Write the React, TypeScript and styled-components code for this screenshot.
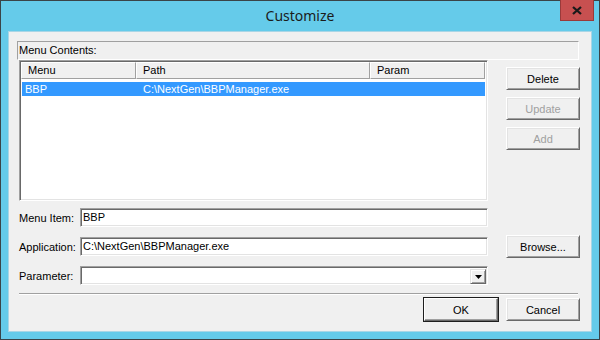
import styled, { createGlobalStyle } from "styled-components";

const GlobalStyle = createGlobalStyle`
  html, body {
    margin: 0;
    padding: 0;
    background: #ffffff;
  }
  * {
    box-sizing: border-box;
  }
`;

const columns = [
  { title: "Menu", width: 115 },
  { title: "Path", width: 234 },
  { title: "Param", width: 115 },
];

const App = () => {
  return (
    <>
      <GlobalStyle />
      <Window>
        <TitleBar>
          <Title>Customize</Title>
          <CloseButton aria-label="Close">
            <svg width="10" height="9" viewBox="0 0 10 9">
              <path
                d="M1 1 L9 8 M9 1 L1 8"
                stroke="#1a1a1a"
                strokeWidth="2.3"
                fill="none"
              />
            </svg>
          </CloseButton>
        </TitleBar>

        <Client>
          <GroupHeader>Menu Contents:</GroupHeader>

          <ListRow>
            <ListView>
              <HeaderRow>
                {columns.map((c) => (
                  <HeaderCell key={c.title} $width={c.width}>
                    {c.title}
                  </HeaderCell>
                ))}
              </HeaderRow>
              <ItemRow $selected>
                <ItemCell $width={114} $pad={3}>
                  BBP
                </ItemCell>
                <ItemCell $width={234} $pad={7}>
                  C:\NextGen\BBPManager.exe
                </ItemCell>
                <ItemCell $width={115} $pad={7}></ItemCell>
              </ItemRow>
            </ListView>

            <ButtonColumn>
              <Button>Delete</Button>
              <Button disabled>Update</Button>
              <Button disabled>Add</Button>
            </ButtonColumn>
          </ListRow>

          <Form>
            <Label>Menu Item:</Label>
            <TextField>BBP</TextField>
            <span />

            <Label>Application:</Label>
            <TextField>C:\NextGen\BBPManager.exe</TextField>
            <RowButton>Browse...</RowButton>

            <Label>Parameter:</Label>
            <Combo>
              <ComboText></ComboText>
              <ComboArrow>
                <svg width="7" height="4" viewBox="0 0 7 4">
                  <path d="M0 0 H7 L3.5 4 Z" fill="#000" />
                </svg>
              </ComboArrow>
            </Combo>
            <span />
          </Form>

          <Separator />

          <Footer>
            <Button $default>OK</Button>
            <Button>Cancel</Button>
          </Footer>
        </Client>
      </Window>
    </>
  );
};

const Window = styled.div`
  width: 600px;
  height: 340px;
  border: 1px solid #3a4448;
  background-color: #65cbea;
  display: flex;
  flex-direction: column;
  font-family: "Liberation Sans", Arial, sans-serif;
  font-size: 11px;
  color: #000;
`;

const TitleBar = styled.div`
  height: 30px;
  display: grid;
  grid-template-columns: 1fr auto 1fr;
  align-items: start;
`;

const Title = styled.div`
  grid-column: 2;
  font-family: "Noto Sans", "Liberation Sans", sans-serif;
  font-size: 14px;
  line-height: 30px;
  color: #1b1b1b;
`;

const CloseButton = styled.button`
  grid-column: 3;
  justify-self: end;
  margin: -1px 5px 0 0;
  width: 34px;
  height: 21px;
  padding: 0;
  border: 1px solid #9a3a3a;
  border-top: none;
  background-color: #c75050;
  display: flex;
  align-items: center;
  justify-content: center;
`;

const Client = styled.div`
  flex: 1;
  margin: 0 7px 7px 7px;
  background-color: #f0f0f0;
  border: 1px solid #a9d6e6;
  padding: 9px 11px 0 8px;
  display: flex;
  flex-direction: column;
`;

const GroupHeader = styled.div`
  height: 19px;
  margin-right: 1px;
  border-top: 1px solid #a0a0a0;
  border-left: 1px solid #a0a0a0;
  border-right: 1px solid #ffffff;
  border-bottom: 1px solid #ffffff;
  padding-left: 1px;
  line-height: 17px;
`;

const ListRow = styled.div`
  display: grid;
  grid-template-columns: 469px 1fr;
  margin-left: 2px;
`;

const ListView = styled.div`
  height: 141px;
  background-color: #ffffff;
  border-top: 1px solid #a0a0a0;
  border-left: 1px solid #a0a0a0;
  border-right: 1px solid #ffffff;
  border-bottom: 1px solid #ffffff;
  box-shadow: inset 1px 1px 0 #696969, inset -1px -1px 0 #e3e3e3;
  padding: 1px;
`;

const HeaderRow = styled.div`
  display: flex;
  height: 17px;
`;

const HeaderCell = styled.div<{ $width: number }>`
  width: ${(p) => p.$width}px;
  flex: none;
  background-color: #f0f0f0;
  border-top: 1px solid #ffffff;
  border-left: 1px solid #ffffff;
  border-right: 1px solid #a0a0a0;
  border-bottom: 1px solid #a0a0a0;
  padding-left: 6px;
  line-height: 15px;
`;

const ItemRow = styled.div<{ $selected?: boolean }>`
  display: flex;
  height: 14px;
  margin: 3px 0 0 1px;
  width: 463px;
  background-color: ${(p) => (p.$selected ? "#3399ff" : "transparent")};
  color: ${(p) => (p.$selected ? "#ffffff" : "#000000")};
  line-height: 14px;
`;

const ItemCell = styled.div<{ $width: number; $pad: number }>`
  width: ${(p) => p.$width}px;
  flex: none;
  padding-left: ${(p) => p.$pad}px;
  white-space: nowrap;
`;

const ButtonColumn = styled.div`
  display: flex;
  flex-direction: column;
  align-items: flex-end;
  gap: 7px;
  padding-top: 7px;
`;

const Button = styled.button<{ $default?: boolean }>`
  width: 74px;
  height: 23px;
  padding: 0;
  font-family: "Liberation Sans", Arial, sans-serif;
  font-size: 11px;
  color: #000;
  background-color: #f0f0f0;
  border-top: 1px solid #ffffff;
  border-left: 1px solid #ffffff;
  border-right: 1px solid #696969;
  border-bottom: 1px solid #696969;
  box-shadow: ${(p) =>
    p.$default
      ? "0 0 0 1px #1e1e1e, inset -1px -1px 0 #a0a0a0"
      : "inset 1px 1px 0 #e3e3e3, inset -1px -1px 0 #a0a0a0"};

  &:disabled {
    color: #a0a0a0;
  }
`;

const RowButton = styled(Button)`
  justify-self: end;
  margin: -2px 0;
`;

const Form = styled.div`
  display: grid;
  grid-template-columns: 61px 408px 1fr;
  grid-template-rows: 19px 19px 19px;
  row-gap: 10px;
  align-items: center;
  margin: 7px 0 0 2px;
`;

const Label = styled.div`
  white-space: nowrap;
`;

const fieldBorder = `
  background-color: #ffffff;
  border-top: 1px solid #a0a0a0;
  border-left: 1px solid #a0a0a0;
  border-right: 1px solid #ffffff;
  border-bottom: 1px solid #ffffff;
  box-shadow: inset 1px 1px 0 #696969, inset -1px -1px 0 #e3e3e3;
`;

const TextField = styled.div`
  ${fieldBorder}
  height: 19px;
  padding-left: 2px;
  line-height: 17px;
  white-space: nowrap;
`;

const Combo = styled.div`
  ${fieldBorder}
  height: 19px;
  display: flex;
  padding: 2px 1px 1px 2px;
`;

const ComboText = styled.div`
  flex: 1;
`;

const ComboArrow = styled.div`
  width: 16px;
  height: 15px;
  background-color: #f0f0f0;
  border-top: 1px solid #e3e3e3;
  border-left: 1px solid #e3e3e3;
  border-right: 1px solid #696969;
  border-bottom: 1px solid #696969;
  box-shadow: inset 1px 1px 0 #ffffff, inset -1px -1px 0 #a0a0a0;
  display: flex;
  align-items: center;
  justify-content: center;
`;

const Separator = styled.div`
  height: 2px;
  margin: 8px 2px 0 2px;
  border-top: 1px solid #a0a0a0;
  border-bottom: 1px solid #ffffff;
`;

const Footer = styled.div`
  display: flex;
  justify-content: flex-end;
  gap: 8px;
  margin-top: 3px;
`;

export default App;
